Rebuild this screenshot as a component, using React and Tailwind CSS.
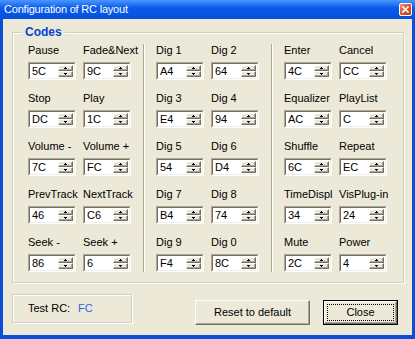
import React from "react";

const groups = [
  [
    ["Pause", "5C", "Fade&Next", "9C"],
    ["Stop", "DC", "Play", "1C"],
    ["Volume -", "7C", "Volume +", "FC"],
    ["PrevTrack", "46", "NextTrack", "C6"],
    ["Seek -", "86", "Seek +", "6"],
  ],
  [
    ["Dig 1", "A4", "Dig 2", "64"],
    ["Dig 3", "E4", "Dig 4", "94"],
    ["Dig 5", "54", "Dig 6", "D4"],
    ["Dig 7", "B4", "Dig 8", "74"],
    ["Dig 9", "F4", "Dig 0", "8C"],
  ],
  [
    ["Enter", "4C", "Cancel", "CC"],
    ["Equalizer", "AC", "PlayList", "C"],
    ["Shuffle", "6C", "Repeat", "EC"],
    ["TimeDispl", "34", "VisPlug-in", "24"],
    ["Mute", "2C", "Power", "4"],
  ],
];

const SpinBtn = ({ up }) => (
  <div className="flex-1 flex items-center justify-center bg-[#ECE9D8] border border-t-white border-l-white border-r-[#716F64] border-b-[#716F64] shadow-[inset_-1px_-1px_0_#ACA899]">
    <svg width="5" height="2" shapeRendering="crispEdges">
      {up ? (
        <>
          <rect x="2" y="0" width="1" height="1" fill="#000" />
          <rect x="1" y="1" width="3" height="1" fill="#000" />
        </>
      ) : (
        <>
          <rect x="1" y="0" width="3" height="1" fill="#000" />
          <rect x="2" y="1" width="1" height="1" fill="#000" />
        </>
      )}
    </svg>
  </div>
);

const SpinBox = ({ value }) => (
  <div className="h-[18px] w-[48px] border border-t-[#ACA899] border-l-[#ACA899] border-b-white border-r-white">
    <div className="flex h-full bg-white border border-t-[#716F64] border-l-[#716F64] border-b-[#F1EFE2] border-r-[#F1EFE2]">
      <span className="flex-1 pl-[2px] leading-[14px] text-black">{value}</span>
      <div className="flex flex-col w-[16px] py-[1px] pr-[1px]">
        <SpinBtn up />
        <SpinBtn />
      </div>
    </div>
  </div>
);

const Field = ({ label, value }) => (
  <div className="flex flex-col">
    <div className="h-[13px] leading-[13px] whitespace-nowrap">{label}</div>
    <div className="mt-[5px]">
      <SpinBox value={value} />
    </div>
  </div>
);

const Separator = () => (
  <div className="w-[2px] self-stretch border-l border-l-[#ACA899] border-r border-r-white mx-[11px] ml-[12px]"></div>
);

const App = () => {
  return (
    <div className="w-[415px] h-[339px] bg-[#0A4FDA] flex flex-col font-['Liberation_Sans',Arial,sans-serif] text-[11px] text-black select-none">
      {/* title bar */}
      <div className="h-[19px] flex items-center justify-between pl-[4px] pr-[3px] bg-linear-to-b from-[#4A96FF] via-[#0A5CEC] via-40% to-[#0650DC]">
        <span className="text-white text-[11px] tracking-[-0.2px]">Configuration of RC layout</span>
        <div className="w-[13px] h-[13px] rounded-[2px] border border-white bg-linear-to-br from-[#F08A6C] via-[#E0522F] to-[#C23A15] flex items-center justify-center">
          <svg width="7" height="7" viewBox="0 0 7 7">
            <path d="M1 1L6 6M6 1L1 6" stroke="#fff" strokeWidth="1.6" strokeLinecap="square" />
          </svg>
        </div>
      </div>

      {/* client area */}
      <div className="flex-1 mx-[3px] mb-[4px] bg-[#ECE9D8] flex flex-col">
        <div className="relative mt-[13px] ml-[9px] w-[392px] h-[251px] border border-[#D0D0BF] shadow-[inset_1px_1px_0_#fff,1px_1px_0_#fff]">
          <span className="absolute left-[9px] -top-[8px] bg-[#ECE9D8] px-[3px] text-[12px] leading-[14px] font-bold text-[#0046D5]">Codes</span>
          <div className="flex pl-[15px] pt-[11px]">
            {groups.map((rows, gi) => (
              <React.Fragment key={gi}>
                {gi > 0 && <Separator />}
                <div className="flex flex-col gap-[12px] w-[103px]">
                  {rows.map((r, ri) => (
                    <div key={ri} className="grid grid-cols-[48px_48px] gap-x-[7px]">
                      <Field label={r[0]} value={r[1]} />
                      <Field label={r[2]} value={r[3]} />
                    </div>
                  ))}
                </div>
              </React.Fragment>
            ))}
          </div>
        </div>

        {/* bottom row */}
        <div className="flex items-start mt-[11px] ml-[9px]">
          <div className="w-[120px] h-[29px] border border-[#D0D0BF] shadow-[inset_1px_1px_0_#fff,1px_1px_0_#fff] flex items-center pl-[15px]">
            <span className="w-[50px]">Test RC:</span>
            <span className="text-[#2F63D6]">FC</span>
          </div>
          <button className="ml-[63px] mt-[6px] w-[115px] h-[25px] bg-[#ECE9D8] border border-t-white border-l-white border-r-[#716F64] border-b-[#716F64] shadow-[inset_-1px_-1px_0_#ACA899]">
            Reset to default
          </button>
          <button className="ml-[13px] mt-[6px] w-[75px] h-[25px] border border-black p-[0px]">
            <div className="w-full h-full bg-[#ECE9D8] border border-t-white border-l-white border-r-[#716F64] border-b-[#716F64] shadow-[inset_-1px_-1px_0_#ACA899] p-[2px]">
              <div className="w-full h-full border border-dotted border-black flex items-center justify-center">
                Close
              </div>
            </div>
          </button>
        </div>
      </div>
    </div>
  );
};

export default App;
